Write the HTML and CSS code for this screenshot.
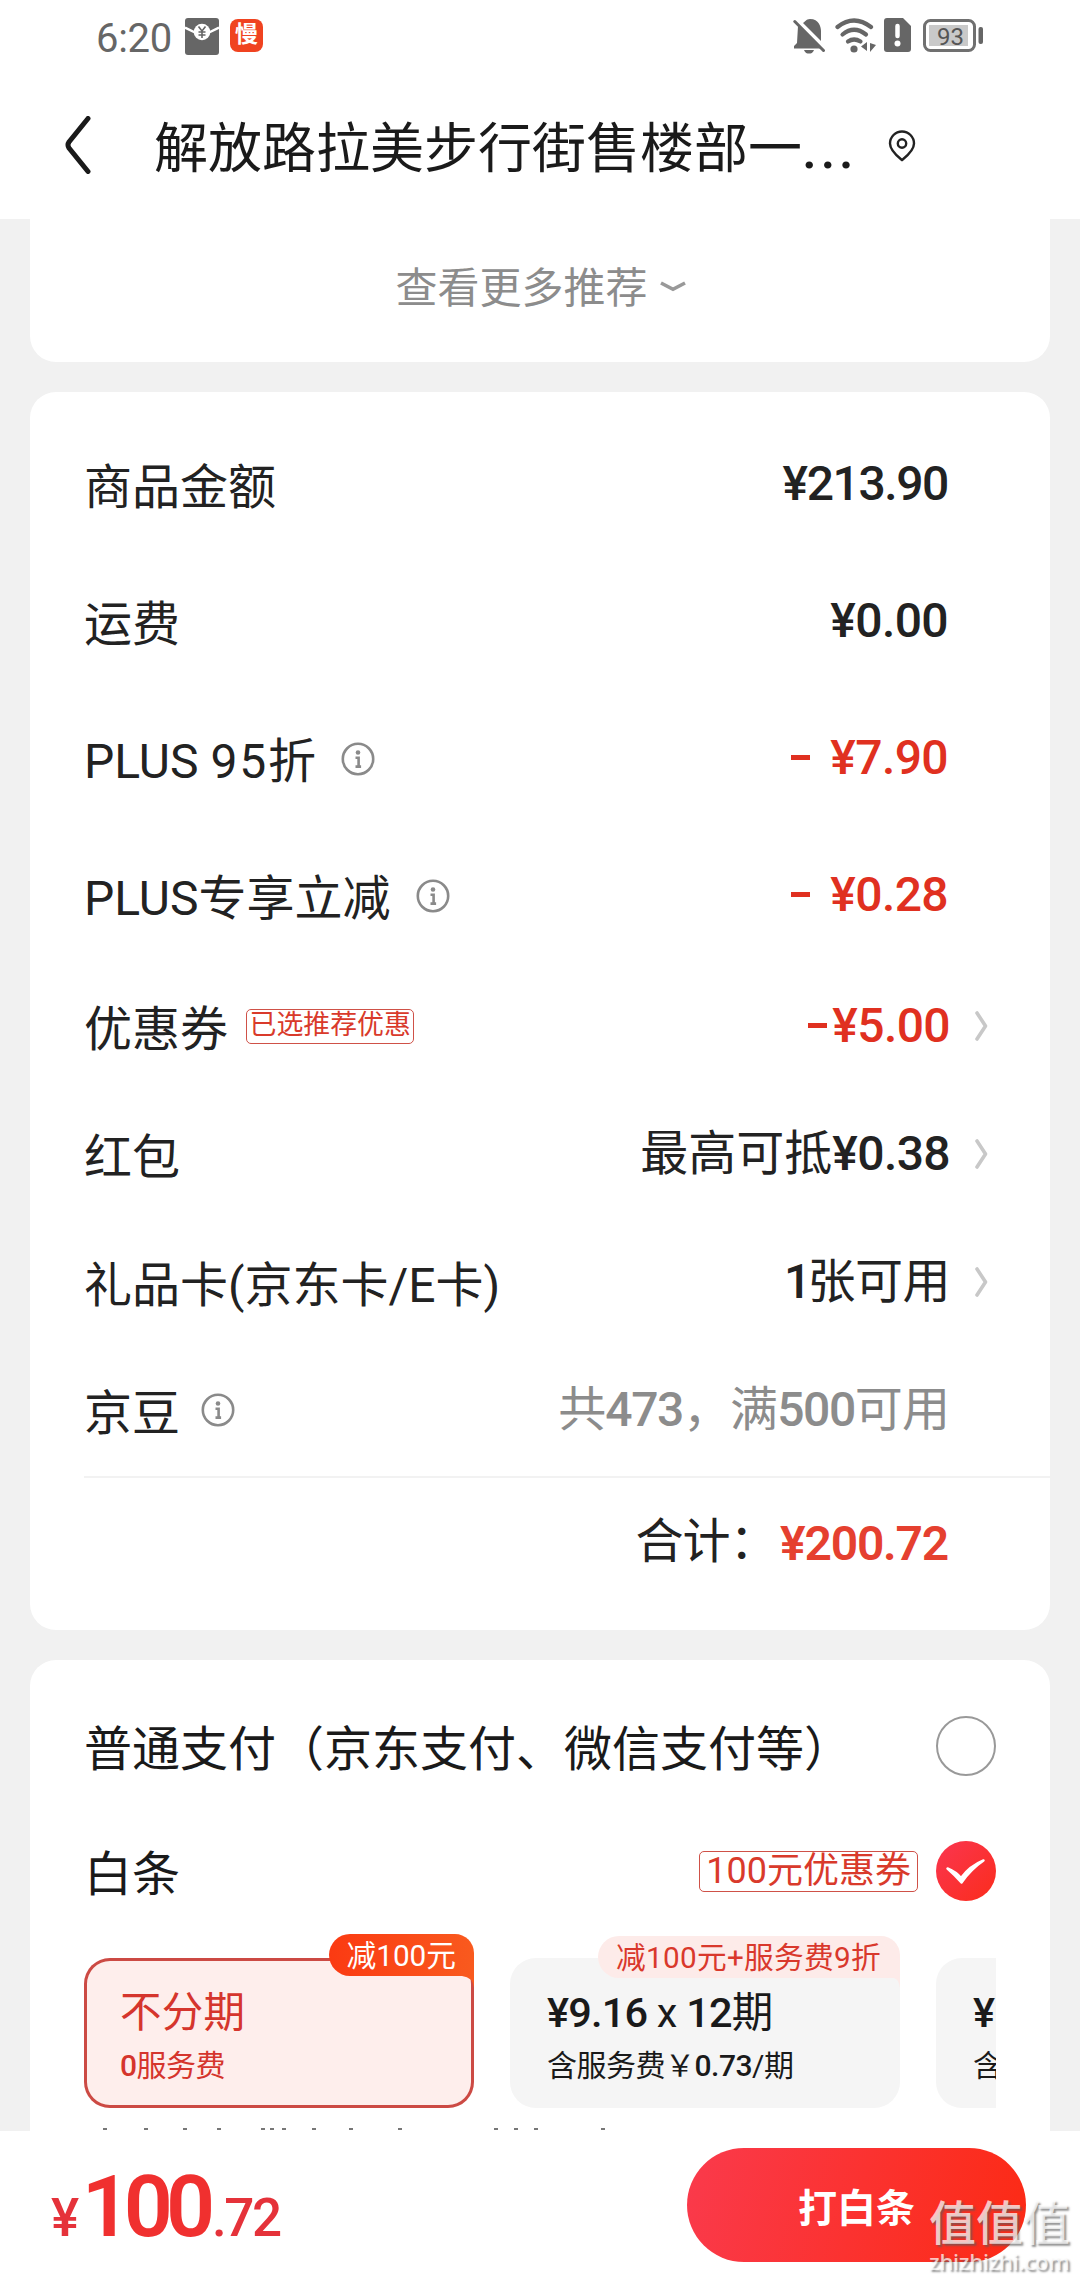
FILE: index.html
```html
<!DOCTYPE html>
<html lang="zh-CN">
<head>
<meta charset="utf-8">
<title>确认订单</title>
<link rel="stylesheet" href="styles.css">
</head>
<body>
<svg class="defs" width="0" height="0">
  <symbol id="info" viewBox="0 0 34 34"><circle cx="17" cy="17" r="15.2" fill="none" stroke="#8a8a8a" stroke-width="2.600"/><circle cx="17" cy="10.500" r="2.300" fill="#8a8a8a"/><path d="M14.500 15.800H17.600V24.500M14.500 24.600h5.600" fill="none" stroke="#8a8a8a" stroke-width="2.600"/></symbol>
  <symbol id="more" viewBox="0 0 14 30"><path d="M2 2l8.500 13L2 28" fill="none" stroke="#c8c8c8" stroke-width="3.600" stroke-linecap="round" stroke-linejoin="round"/></symbol>
</svg>
<div class="screen">
  <header class="top">
    <div class="status">
      <span class="clock">6:20</span>
      <svg class="envelope" width="34" height="37" viewBox="0 0 34 37"><rect x="0" y="0" width="34" height="37" rx="3" fill="#666"/><path d="M0 9.500 10 14.500M34 9.500 24 14.500" stroke="#fff" stroke-width="2.500"/><circle cx="17" cy="14" r="8.300" fill="#fff"/><path d="M13.500 8.500 17 13l3.500-4.500M17 13v7M13.500 14h7M13.500 17h7" fill="none" stroke="#666" stroke-width="1.600"/></svg>
      <span class="app-badge">慢</span>
      <span class="grow"></span>
      <svg class="status-icons" width="192" height="38" viewBox="0 0 192 38">
        <g fill="#666">
          <path d="M5 9 29 31.500H1V29l3-3z"/>
          <path d="M10 6c2-1 3-4 7-4 9 0 11 8 11 12v10z"/>
          <path d="M11 33h10c-1 3-3 3.500-5 3.500S12 36 11 33z"/>
          <path d="M91 4q0-3 3-3h16l8 8v23q0 3-3 3H94q-3 0-3-3z"/>
          <rect x="185.500" y="10" width="4.500" height="17" rx="2"/>
          <circle cx="61" cy="32" r="3.600"/>
          <path d="M74 25v9l-6-4.500zM77 26v9l6-7z"/>
        </g>
        <path d="M5 5.500 31 31.500" stroke="#fff" stroke-width="4"/>
        <path d="M1.800 4.500 30.500 33.500" stroke="#666" stroke-width="3" stroke-linecap="round"/>
        <g fill="none" stroke="#666" stroke-width="4.200" stroke-linecap="round"><path d="M44.500 10Q61-3 78 10"/><path d="M49.500 17.500Q61 8 73 17.500"/><path d="M55 24.500Q61 20.500 67.500 24.500"/></g>
        <path d="M104.500 9v10" stroke="#fff" stroke-width="4.500" stroke-linecap="round"/><circle cx="104.500" cy="26.500" r="3" fill="#fff"/>
        <rect x="131.500" y="3.500" width="50" height="30" rx="6" fill="none" stroke="#707070" stroke-width="3"/>
        <rect x="136" y="8" width="39" height="21" fill="#c9c9c9"/>
        <text x="157.500" y="27.500" text-anchor="middle" class="battery">93</text>
      </svg>
    </div>
    <div class="nav">
      <svg width="26" height="58" viewBox="0 0 26 58"><path d="M23 2.500 4 26q-2 3 0 6l19 23.500" fill="none" stroke="#1a1a1a" stroke-width="5" stroke-linecap="round"/></svg>
      <h1 class="address">解放路拉美步行街售楼部一<span class="dots">...</span></h1>
      <svg class="pin" width="28" height="32" viewBox="0 0 28 32"><path d="M14 30C11 27.500 2 21 2 13.500a12 12 0 0 1 24 0C26 21 17 27.500 14 30z" fill="none" stroke="#222" stroke-width="2.400"/><circle cx="14" cy="13.500" r="4.200" fill="none" stroke="#222" stroke-width="2.400"/></svg>
    </div>
  </header>

  <main class="content">
    <section class="card recommend">
      <span>查看更多推荐</span>
      <svg width="26" height="11" viewBox="0 0 26 11"><path d="M1 2 13 8.300 25 2" fill="none" stroke="#999" stroke-width="3.600"/></svg>
    </section>

    <section class="card bill">
      <div class="row"><span class="label">商品金额</span><span class="value narrow">¥213.90</span></div>
      <div class="row"><span class="label">运费</span><span class="value">¥0.00</span></div>
      <div class="row"><span class="label">PLUS <i class="wide">95</i>折</span><svg class="info"><use href="#info"/></svg><span class="value red"><b class="minus"></b>¥7.90</span></div>
      <div class="row"><span class="label">PLUS专享立减</span><svg class="info"><use href="#info"/></svg><span class="value red"><b class="minus"></b>¥0.28</span></div>
      <div class="row linked"><span class="label">优惠券</span><span class="tag picked">已选推荐优惠</span><span class="value red"><b class="minus tight"></b>¥5.00</span><svg class="more"><use href="#more"/></svg></div>
      <div class="row linked"><span class="label">红包</span><span class="value"><i>最高可抵</i>¥0.38</span><svg class="more"><use href="#more"/></svg></div>
      <div class="row linked"><span class="label">礼品卡(京东卡/E卡)</span><span class="value one">1<i>张可用</i></span><svg class="more"><use href="#more"/></svg></div>
      <div class="row linked beans"><span class="label">京豆</span><svg class="info"><use href="#info"/></svg><span class="value narrow gray"><i>共</i>473<i>，满</i>500<i>可用</i></span></div>
      <div class="total"><span class="label">合计：</span><span class="sum">¥200.72</span></div>
    </section>

    <section class="card pay">
      <div class="method"><span class="label">普通支付（京东支付、微信支付等）</span><span class="radio"></span></div>
      <div class="method second"><span class="label">白条</span><span class="tag coupon">100元优惠券</span>
        <svg class="check" width="60" height="60" viewBox="0 0 60 60"><defs><linearGradient id="cg" x1="0" y1="0" x2="1" y2="1"><stop offset="0" stop-color="#fa3650"/><stop offset="1" stop-color="#fb2c1c"/></linearGradient></defs><circle cx="30" cy="30" r="30" fill="url(#cg)"/><path d="M11.500 27.500Q20 31 25 37 34 25 47.500 19.500 35 28 25.500 41.500 19 34 11.500 27.500z" fill="#fff" stroke="#fff" stroke-width="2.500" stroke-linejoin="round"/></svg>
      </div>
      <div class="plans">
        <div class="plan active"><span class="badge">减100元</span><svg class="fold" width="12" height="12"><path d="M0 0h12v12Q11 1 0 0z" fill="#f95a1e"/></svg><p class="name">不分期</p><p class="fee"><b>0</b>服务费</p></div>
        <div class="plan"><span class="badge soft">减100元+服务费9折</span><svg class="fold" width="12" height="12"><path d="M0 0h12v12Q11 1 0 0z" fill="#fdebe9"/></svg><p class="name"><b>¥9.16</b> x <b>12</b>期</p><p class="fee">含服务费￥<b>0.73</b>/期</p></div>
        <div class="plan last"><p class="name"><b>¥</b></p><p class="fee">含</p></div>
      </div>
      <svg class="clipped" width="540" height="2" viewBox="84 0 540 2"><path d="M103 1h4M144 1h4M183 1h4M217 1h4M261 1h4M270 1h4M282 1h4M312 1h4M349 1h4M398 1h4M494 1h4M514 1h4M534 1h4M601 1h4" stroke="#777" stroke-width="2"/></svg>
    </section>
  </main>

  <footer class="bar">
    <div class="price"><span>¥</span><strong>100</strong><span class="cents">.72</span></div>
    <button class="submit">打白条</button>
  </footer>
  <div class="watermark"><span class="mark-cn">值值值</span><span class="mark-en">zhizhizhi.com</span></div>
</div>
</body>
</html>
```
FILE: styles.css
```css
* { box-sizing: border-box; }
body { margin: 0; background: #f1f1f1; font-family: Roboto, "Noto Sans CJK SC", sans-serif; color: #222; }
i { font-style: normal; }
p, h1 { margin: 0; }
svg { display: block; flex: none; }
.defs { position: absolute; }
.screen { position: relative; width: 1080px; height: 2280px; overflow: hidden; display: flex; flex-direction: column; }

.top { height: 219px; background: #fff; flex: none; }
.status { height: 72px; padding: 0 95px 0 96px; display: flex; align-items: center; }
.clock { font-size: 40px; line-height: 40px; color: #666; width: 89px; padding-top: 5px; letter-spacing: -0.3px; }
.app-badge { width: 33px; height: 33px; margin: 0 0 1px 11px; border-radius: 8px; background: #f04320; color: #fff; font-size: 23px; line-height: 32px; font-weight: 700; text-align: center; }
.grow { flex: 1; }
.status-icons { width: 192px; }
.battery { font: 400 24px Roboto, sans-serif; fill: #555; }
.nav { height: 146px; padding-left: 65px; display: flex; align-items: center; }
.address { margin-left: 63px; width: 703px; padding-top: 10px; font-size: 54px; line-height: 60px; font-weight: 400; color: #1a1a1a; white-space: nowrap; }
.dots { font-weight: 500; letter-spacing: 3.4px; }
.pin { margin: 2px 0 0 31px; }

.content { height: 1912px; flex: none; padding: 0 30px; display: flex; flex-direction: column; gap: 30px; overflow: hidden; }
.card { background: #fff; border-radius: 26px; flex: none; }
.recommend { height: 143px; border-radius: 0 0 26px 26px; padding: 0 0 4px 1px; display: flex; justify-content: center; align-items: center; gap: 12px; font-size: 42px; line-height: 48px; color: #8c8c8c; }
.recommend svg { margin-bottom: 5px; }
.bill { height: 1238px; padding: 24px 0 0 54px; }
.row { height: 137px; display: flex; align-items: center; padding-right: 102px; }
.row.linked { height: 128px; padding: 0 61px 4px 0; }
.row.linked.beans { height: 130px; padding: 0 101px 4px 0; border-bottom: 2px solid #f2f2f2; }
.label { padding-top: 6px; font-size: 48px; line-height: 56px; white-space: nowrap; }
.linked .label { padding-top: 8px; }
.wide { letter-spacing: 1.800px; }
.info { width: 34px; height: 34px; margin-left: 25px; }
.beans .info { margin: 0 0 0 21px; }
.value { margin-left: auto; font-size: 48px; line-height: 56px; padding-bottom: 1px; font-weight: 500; letter-spacing: -0.600px; white-space: nowrap; }
.value.narrow { letter-spacing: -1.400px; }
.value.one { letter-spacing: -3.800px; }
.value i { font-weight: 400; letter-spacing: 0; }
.value.one i { letter-spacing: -0.500px; }
.beans .value i { letter-spacing: -0.900px; }
.red { color: #e03020; }
.gray { color: #8c8c8c; }
.minus { display: inline-block; width: 19px; height: 5px; background: currentColor; vertical-align: 14px; margin-right: 20px; }
.minus.tight { margin-right: 5px; }
.more { width: 14px; height: 30px; margin-left: 25px; }
.tag { border: 1.500px solid #cf5148; border-radius: 5px; color: #d93a2b; white-space: nowrap; }
.picked { margin-left: 18px; font-size: 26.900px; line-height: 31px; height: 35px; padding: 0 2.500px; }
.total { height: 122px; padding: 4px 102px 0 0; display: flex; align-items: center; justify-content: flex-end; }
.total .label { padding-top: 1px; margin-right: 3px; letter-spacing: -0.800px; }
.sum { padding-top: 5px; font-size: 48px; line-height: 56px; font-weight: 600; color: #e5402f; letter-spacing: -1.200px; }

.pay { height: 560px; padding: 26px 54px 0; border-radius: 26px 26px 0 0; }
.method { height: 120px; display: flex; align-items: center; justify-content: space-between; color: #1a1a1a; }
.method .label { padding-top: 8px; }
.method.second { height: 130px; justify-content: flex-start; }
.radio { width: 60px; height: 60px; border: 2px solid #999; border-radius: 50%; }
.coupon { margin-left: auto; margin-right: 18px; height: 41px; padding: 0 6px; font-size: 36px; line-height: 39px; }
.plans { height: 176px; padding-top: 26px; display: flex; gap: 36px; overflow: hidden; margin-top: -4px; }
.plan { position: relative; flex: none; width: 390px; height: 150px; padding: 30px 0 0 37px; border-radius: 26px; background: #f5f5f5; color: #1a1a1a; white-space: nowrap; }
.plan.last { width: 60px; border-radius: 26px 0 0 26px; overflow: hidden; }
.active { padding-left: 36px; background: #feeeec; box-shadow: inset 0 0 0 3px #cc4a44; color: #d5352d; }
.name { font-size: 41.500px; line-height: 50px; letter-spacing: -0.800px; }
.active .name { letter-spacing: 0.200px; }
.fee { margin-top: 4px; font-size: 30px; line-height: 48px; letter-spacing: -0.500px; }
.plan b { font-weight: 500; }
.badge { position: absolute; right: 0; top: -24px; height: 42px; padding: 0 18px; border-radius: 22px 20px 0 22px; background: linear-gradient(90deg, #fb3a12, #f95a1e); color: #fff; font-size: 29.700px; line-height: 43px; }
.badge.soft { padding: 0 19px 0 18px; background: #fdebe9; color: #d9382c; top: -22px; letter-spacing: 0.300px; }
.fold { position: absolute; right: 0; top: 18px; }
.clipped { margin-top: 20px; }

.bar { height: 149px; flex: none; background: #fff; display: flex; align-items: center; justify-content: space-between; padding: 0 54px 0 51px; }
.price { padding-top: 14px; font-size: 53px; font-weight: 500; color: #e5323a; display: flex; align-items: baseline; line-height: 90px; letter-spacing: -2.500px; }
.price strong { font-size: 86px; font-weight: 600; letter-spacing: -7px; color: #f0302f; margin-left: 5px; }
.cents { margin-left: 4px; }
.submit { width: 339px; height: 114px; margin-bottom: 2px; border: 0; padding: 0; border-radius: 57px; background: linear-gradient(105deg, #fa3a4c, #fc2a14); color: #fff; font: 700 39px/50px "Noto Sans CJK SC", sans-serif; }
.watermark { position: absolute; left: 929px; top: 2191px; width: 150px; display: flex; flex-direction: column; color: rgba(255,255,255,.72); text-shadow: 2px 2px 2px rgba(90,90,90,.65); }
.mark-cn { font: 500 47px/58px "Noto Sans CJK SC", sans-serif; }
.mark-en { font: 500 22.400px/25px "Noto Sans", sans-serif; letter-spacing: -0.300px; }
```
